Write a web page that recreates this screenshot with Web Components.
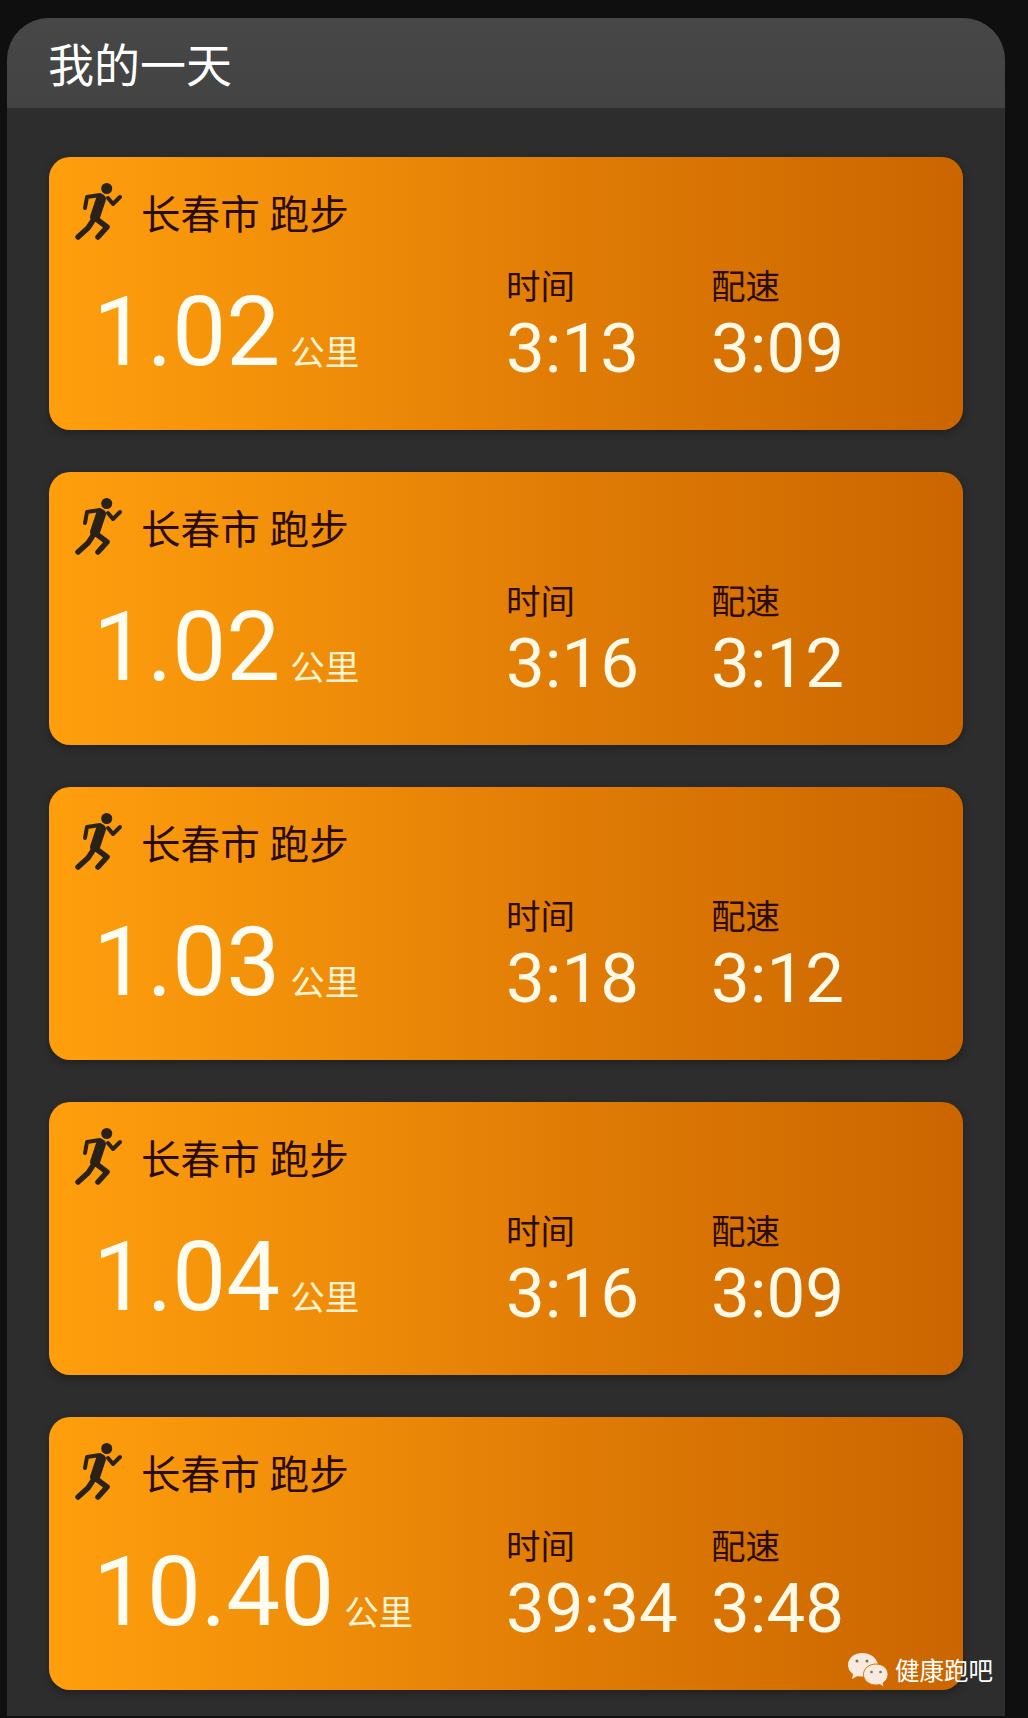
<!DOCTYPE html>
<html lang="zh-CN"><head><meta charset="utf-8"><title>我的一天</title>
<style>
html,body{margin:0;background:#0f0f0f}
body{width:1028px;height:1718px;overflow:hidden;font-family:Roboto,"Noto Sans CJK SC",sans-serif}
</style></head><body>
<day-panel heading="我的一天">
<run-card city="长春市 跑步" dist="1.02" time="3:13" pace="3:09"></run-card>
<run-card city="长春市 跑步" dist="1.02" time="3:16" pace="3:12"></run-card>
<run-card city="长春市 跑步" dist="1.03" time="3:18" pace="3:12"></run-card>
<run-card city="长春市 跑步" dist="1.04" time="3:16" pace="3:09"></run-card>
<run-card city="长春市 跑步" dist="10.40" time="39:34" pace="3:48"></run-card>
</day-panel>
<wx-mark label="健康跑吧"></wx-mark>
<script>
class DayPanel extends HTMLElement{constructor(){super();this.attachShadow({mode:'open'}).innerHTML=`<style>
:host{display:block;box-sizing:border-box;width:998px;height:1698px;margin:18px 0 0 7px;background:#2d2d2d;border-radius:42px 42px 0 0;overflow:hidden;font-family:Roboto,"Noto Sans CJK SC",sans-serif}
header{box-sizing:border-box;height:90px;padding-left:41px;background:linear-gradient(#474747,#434343);color:#fff;font-size:46px;line-height:97px;}
.list{display:flex;flex-direction:column;gap:42px;padding:49px 42px 0}
</style><header></header><div class="list"><slot></slot></div>`;
this.shadowRoot.querySelector('header').textContent=this.getAttribute('heading');}}
customElements.define('day-panel',DayPanel);

class RunCard extends HTMLElement{constructor(){super();const a=n=>this.getAttribute(n);this.attachShadow({mode:'open'}).innerHTML=`<style>
:host{display:block;box-sizing:border-box;height:273px;padding-top:28px;border-radius:21px;background:linear-gradient(90deg,#ff9f0d 0%,#ed8a08 35%,#de7a05 60%,#cb6500 100%);box-shadow:0 3px 8px rgba(0,0,0,.3);color:#fff;font-family:Roboto,"Noto Sans CJK SC",sans-serif}
.top{display:flex;align-items:center;height:56px;padding-left:25px;color:#2b0c04;font-size:39.6px;line-height:56px}
.top span{padding-top:5px}
svg{width:50px;height:56px;margin-right:17px;flex:none;overflow:visible}
.body{display:grid;grid-template-columns:413px 205px 205px;padding:25px 0 0 44px;}
.dist{display:flex;align-items:baseline;gap:10px;margin-top:16px}
.num{font-size:96px;line-height:100px;color:#fffdf2}
.unit{font-size:34.5px;color:#fff3d2}
.lab{font-size:34.5px;line-height:42px;color:#2b0c04}
.val{font-size:69px;line-height:72px;margin-top:5px;color:#fff9e8}
</style>
<div class="top"><svg viewBox="0 0 50 56"><circle cx="32.700" cy="3.500" r="5.500" fill="#2a2118"/>
<g fill="none" stroke="#2a2118" stroke-linecap="round" stroke-linejoin="round">
<path d="M26 10 L13 12 L11 23" stroke-width="4"/>
<path d="M34 13 L39 19 L46 12" stroke-width="4"/>
<path d="M27 14 L21 32" stroke-width="10"/>
<path d="M18 37 L14 43 L4 52" stroke-width="5.500"/>
<path d="M21 33 L33 42 L24 52" stroke-width="5.500"/></g></svg><span>${a('city')}</span></div>
<div class="body">
<div class="dist"><span class="num">${a('dist')}</span><span class="unit">公里</span></div>
<div><div class="lab">时间</div><div class="val">${a('time')}</div></div>
<div><div class="lab">配速</div><div class="val">${a('pace')}</div></div>
</div>`;}}
customElements.define('run-card',RunCard);

class WxMark extends HTMLElement{constructor(){super();this.attachShadow({mode:'open'}).innerHTML=`<style>
:host{position:absolute;left:847px;top:1651px;display:flex;align-items:center;gap:6px;color:#fff;font:24.5px/38px "Noto Sans CJK SC",sans-serif}
svg{width:42px;height:36px}
</style><svg viewBox="0 0 42 36"><path fill="#f7ebe0" d="M15 1C7 1 1 6.500 1 13c0 4 2 7 5 9l-1 5 5.500-3c1.500.4 3 .6 4.500.6 1 0 2-.1 3-.3C20 16 25 12 30 12l.8.1C29.500 5.600 23 1 15 1z"/><path fill="#f7ebe0" stroke="#d97206" stroke-width="1" d="M29 12c-7 0-12.500 4.500-12.500 10.500S22 33 29 33c1.300 0 2.500-.2 3.700-.5L37 35l-1-4c3-2 5-5 5-8.500C41 16.500 36 12 29 12z"/><g fill="#8a6a50"><circle cx="10" cy="9" r="1.500"/><circle cx="20" cy="9" r="1.500"/><circle cx="24.500" cy="20" r="1.300"/><circle cx="33.500" cy="20" r="1.300"/></g></svg><span>${this.getAttribute('label')}</span>`;}}
customElements.define('wx-mark',WxMark);
</script></body></html>
